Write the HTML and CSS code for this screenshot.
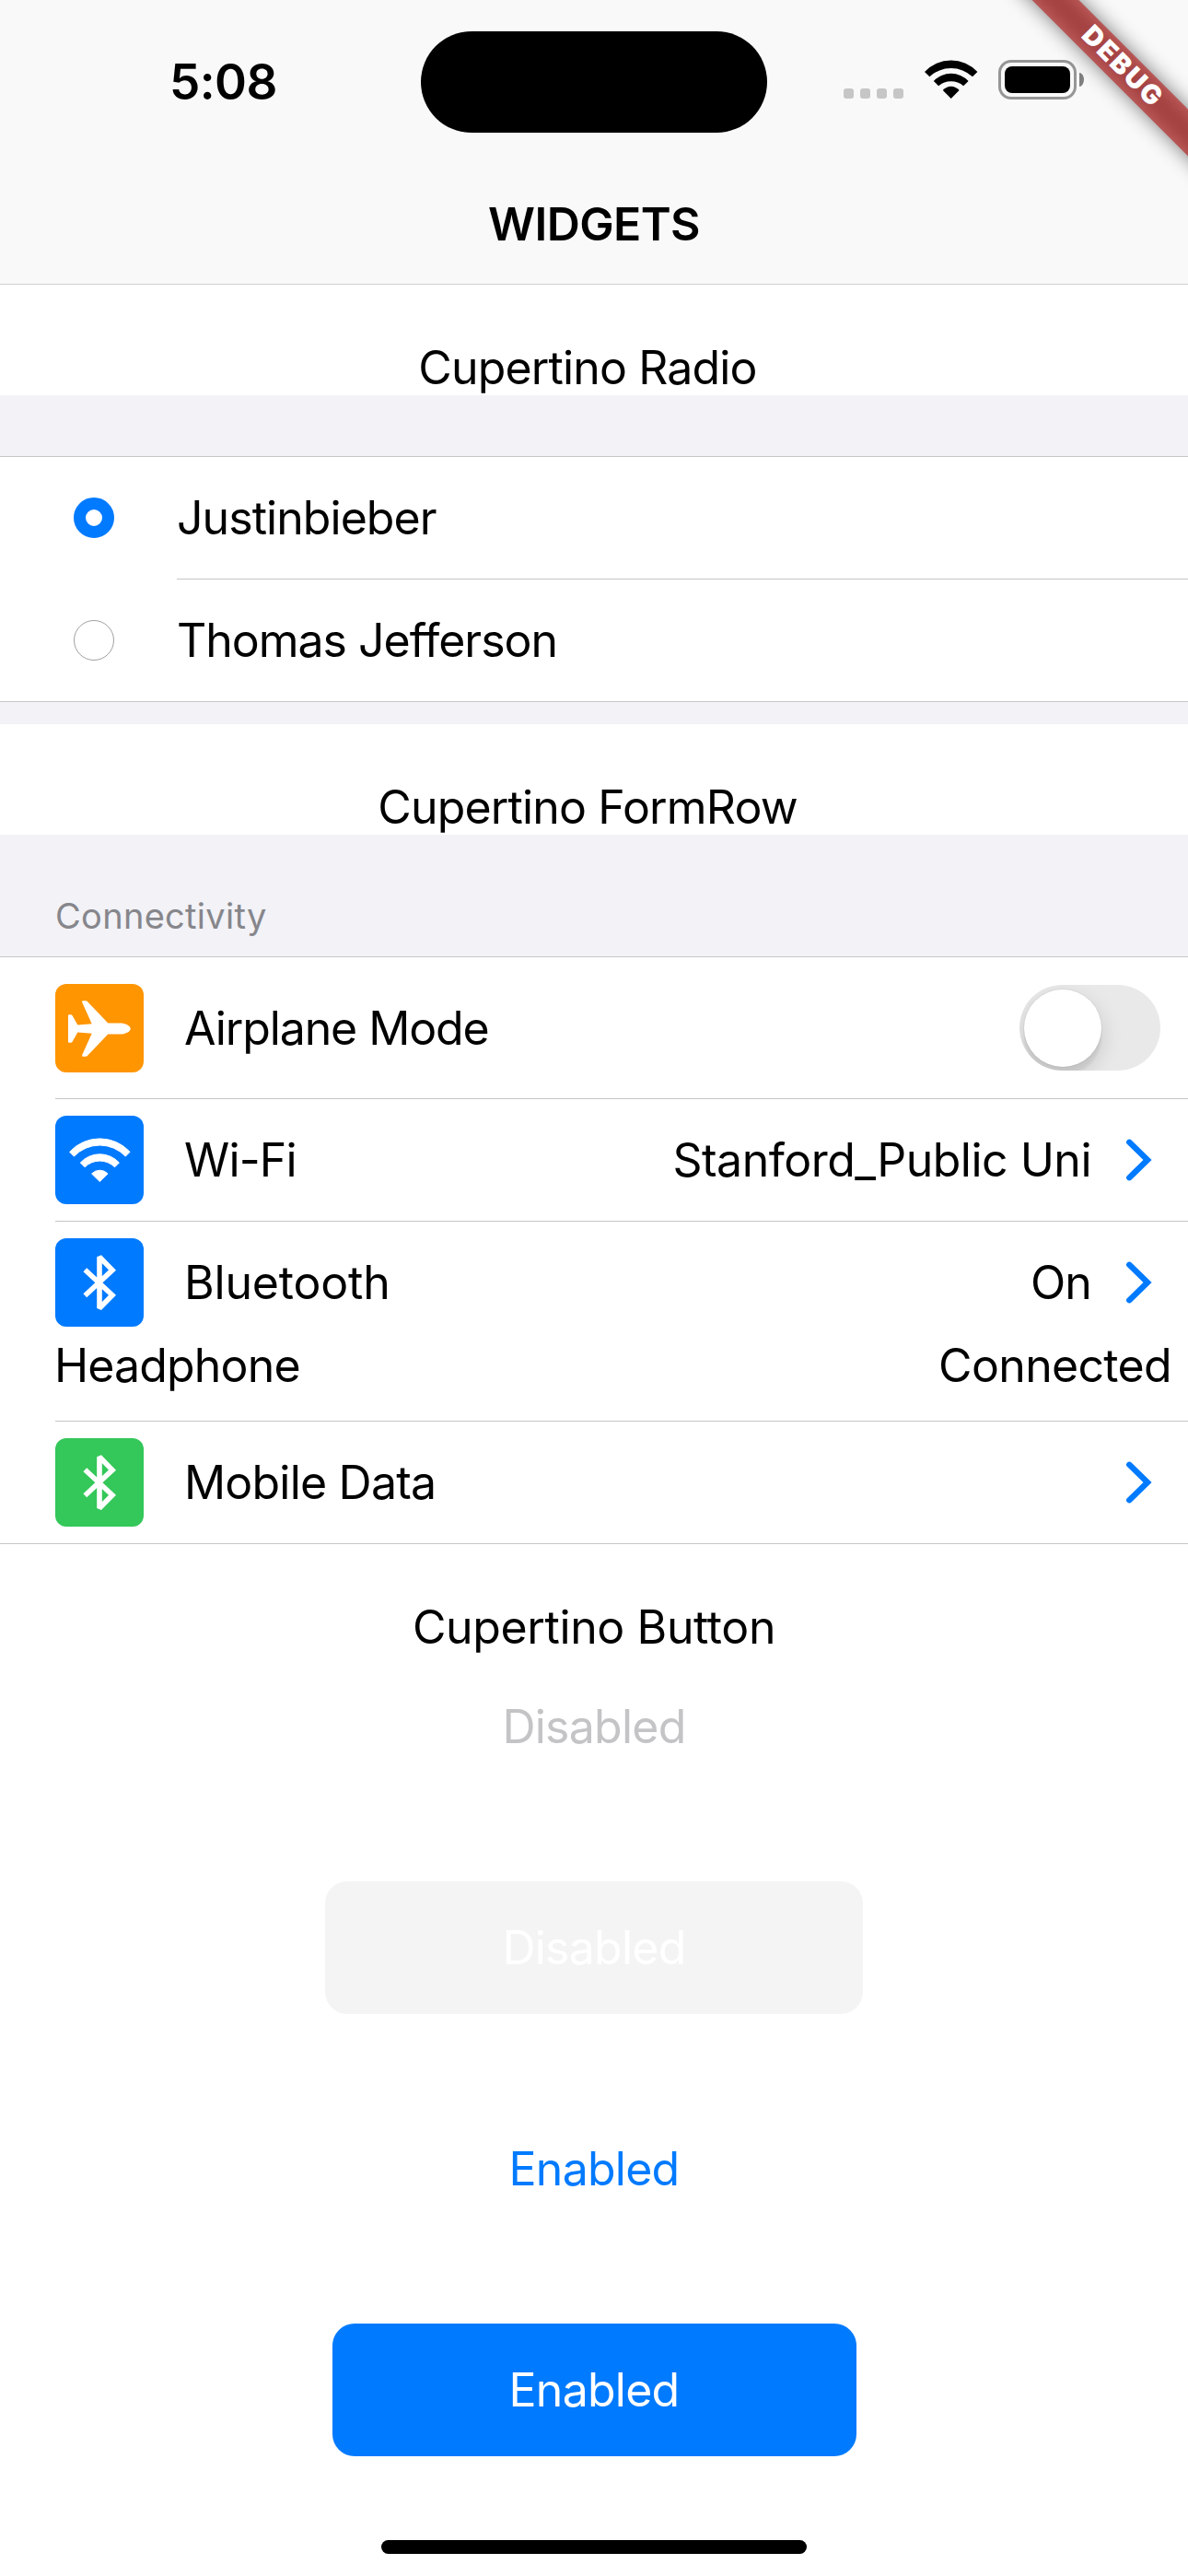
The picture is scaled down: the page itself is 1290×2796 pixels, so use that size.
FILE: index.html
```html
<!DOCTYPE html>
<html lang="en">
<head>
<meta charset="utf-8">
<title>Widgets</title>
<link rel="stylesheet" href="styles.css">
</head>
<body>
<svg class="defs" aria-hidden="true">
  <symbol id="bluetooth" viewBox="0 0 96 96">
    <path d="M32.3 34.2 62 61.8 48 76V20.3L62 34.6 32.3 62.2" fill="none" stroke="#fff" stroke-width="5.6" stroke-linejoin="miter" stroke-miterlimit="2"/>
  </symbol>
  <symbol id="chevron" viewBox="0 0 36 54">
    <path d="M6.3 7.8 26 27 6.3 46.2" fill="none" stroke="#007aff" stroke-width="6.4" stroke-linecap="round"/>
  </symbol>
</svg>
<div class="screen">
  <header class="top">
    <div class="status">
      <span class="time">5:08</span>
      <span class="island"></span>
      <div class="indicators">
        <div class="signal"><i></i><i></i><i></i><i></i></div>
        <svg class="wifi" viewBox="0 0 58 42">
          <path d="M0 13A39 39 0 0 1 57.4 13L52 18.3A33.8 33.8 0 0 0 5.4 18.3Z"/>
          <path d="M9.8 23A25.8 25.8 0 0 1 47.6 23L42.2 28.3A20.5 20.5 0 0 0 15.2 28.3Z"/>
          <path d="M19.8 33A11.6 11.6 0 0 1 37.6 33L28.7 42Z"/>
        </svg>
        <div class="battery"><span class="case"><span class="charge"></span></span><span class="nub"></span></div>
      </div>
    </div>
    <h1 class="nav-title">WIDGETS</h1>
  </header>

  <h2 class="title shifted">Cupertino Radio</h2>
  <section class="group radios">
    <div class="list">
      <label class="radio-row"><span class="radio checked"></span><span class="name justin">Justinbieber</span></label>
      <label class="radio-row"><span class="radio"></span><span class="name thomas">Thomas Jefferson</span></label>
    </div>
  </section>

  <h2 class="title shifted">Cupertino FormRow</h2>
  <section class="group form">
    <h3 class="caption">Connectivity</h3>
    <div class="list">
      <div class="row airplane">
        <svg class="tile orange" viewBox="0 0 96 96">
          <path fill="#fff" d="M14 34.5Q14 33.2 15.3 33.2H16.6Q18 33.2 18.7 34.6L24.3 44.4 39.7 43.2 29.2 20Q28.6 18.3 30 18.3H33Q34.4 18.3 35.3 19.5L57.3 42.4H70C76 42.4 81.7 45 81.7 48.5S76 54.6 70 54.6H57.3L35.3 77.5Q34.4 78.7 33 78.7H30Q28.6 78.7 29.2 77L39.7 53.8 24.3 52.6 18.7 62.4Q18 63.8 16.6 63.8H15.3Q14 63.8 14 62.5Z"/>
        </svg>
        <span class="label ls-airplane">Airplane Mode</span>
        <span class="switch"><span class="thumb"></span></span>
      </div>
      <div class="row">
        <svg class="tile blue" viewBox="0 0 96 96">
          <g fill="#fff" stroke="#fff" stroke-width="1" stroke-linejoin="round">
            <path d="M15.6 39.3A44.4 44.4 0 0 1 81.1 39.3L76.3 44.1A38.4 38.4 0 0 0 20.4 44.1Z"/>
            <path d="M27.3 51A28.6 28.6 0 0 1 69.4 51L64.6 55.8A23 23 0 0 0 32.1 55.8Z"/>
            <path d="M39.6 63A12 12 0 0 1 57.1 63L48.35 71.5Z"/>
          </g>
        </svg>
        <span class="label">Wi-Fi</span>
        <span class="value ls-network">Stanford_Public Uni</span>
        <svg class="chevron"><use href="#chevron"/></svg>
      </div>
      <div class="row with-helper">
        <svg class="tile blue"><use href="#bluetooth"/></svg>
        <span class="label ls-bluetooth">Bluetooth</span>
        <span class="value">On</span>
        <svg class="chevron"><use href="#chevron"/></svg>
      </div>
      <div class="helper"><span>Headphone</span><span class="ls-connected">Connected</span></div>
      <div class="row mobile">
        <svg class="tile green"><use href="#bluetooth"/></svg>
        <span class="label ls-mobile">Mobile Data</span>
        <svg class="chevron"><use href="#chevron"/></svg>
      </div>
    </div>
  </section>

  <h2 class="title ls-button">Cupertino Button</h2>
  <div class="buttons">
    <button class="btn disabled" disabled>Disabled</button>
    <button class="btn filled disabled" disabled>Disabled</button>
    <button class="btn">Enabled</button>
    <button class="btn filled">Enabled</button>
  </div>
  <div class="home-bar"></div>
  <div class="debug">DEBUG</div>
</div>
</body>
</html>
```
FILE: styles.css
```css
* { box-sizing: border-box; margin: 0; }

body {
  background: #fff;
  color: #000;
  font: 400 50px/60px Inter, "Liberation Sans", sans-serif;
  letter-spacing: -0.85px;
}

.defs { position: absolute; width: 0; height: 0; }

.screen {
  position: relative;
  width: 1290px;
  height: 2796px;
  overflow: hidden;
}

/* Status and navigation bars */
.top {
  height: 309px;
  background: #f9f9f9;
  border-bottom: 1px solid #d0d0d0;
}
.status {
  display: grid;
  grid-template-columns: 457px 376px 1fr;
  align-items: center;
  height: 177px;
}
.time {
  padding-left: 184px;
  font-size: 53px;
  font-weight: 600;
  letter-spacing: -0.56px;
}
.island {
  height: 110px;
  margin-top: 1px;
  border-radius: 55px;
  background: #000;
}
.indicators {
  display: flex;
  align-items: flex-end;
  height: 43px;
  margin-bottom: 4px;
  padding-left: 83px;
}
.signal {
  display: flex;
  gap: 7px;
  margin: 0 23px 1px 0;
}
.signal i {
  width: 11px;
  height: 11px;
  border-radius: 3px;
  background: #c6c6c6;
}
.wifi {
  width: 58px;
  height: 42px;
  margin: 0 22px 1px 0;
}
.battery {
  display: flex;
  align-items: center;
  gap: 3px;
}
.case {
  width: 85px;
  height: 43px;
  padding: 4px;
  border: 3px solid #969696;
  border-radius: 14px;
}
.charge {
  display: block;
  height: 29px;
  border-radius: 8px;
  background: #000;
}
.nub {
  width: 5px;
  height: 15px;
  border-radius: 0 5px 5px 0 / 0 7.5px 7.5px 0;
  background: #808080;
}
.nav-title {
  font-size: 50px;
  font-weight: 600;
  line-height: 132px;
  letter-spacing: -0.61px;
  text-align: center;
}

/* Section titles */
.title {
  padding-top: 60px;
  font-size: 50px;
  font-weight: 400;
  text-align: center;
}
.shifted { padding-right: 14px; }

.group { background: #f2f2f7; }
.list {
  background: #fff;
  border-top: 1px solid #c6c6c8;
  border-bottom: 1px solid #c6c6c8;
}

/* Radio list */
.radios { padding: 66px 0 24px; }
.radio-row {
  display: flex;
  align-items: center;
  height: 132px;
  padding-left: 80px;
  gap: 68px;
}
.radio-row + .radio-row { height: 133px; }
.name {
  display: flex;
  flex: 1;
  align-items: center;
  height: 100%;
}
.radio-row + .radio-row .name { border-top: 1px solid #c6c6c8; }
.justin { letter-spacing: -0.95px; }
.thomas { letter-spacing: -1.02px; }
.radio {
  width: 44px;
  height: 44px;
  border: 1px solid #a0a0a3;
  border-radius: 50%;
}
.checked {
  border: 13px solid #007aff;
}

/* Form list */
.caption {
  padding: 65px 60px 21px;
  color: #86868b;
  font-size: 38px;
  font-weight: 400;
  line-height: 46px;
  letter-spacing: 0.3px;
}
.row {
  display: flex;
  align-items: center;
  height: 132px;
  padding-right: 34px;
  margin-left: 60px;
}
.airplane { height: 153px; padding-right: 30px; }
.row + .row, .mobile {
  height: 133px;
  border-top: 1px solid #c6c6c8;
}
.row.with-helper {
  height: 127px;
  padding-top: 6px;
}
.tile {
  width: 96px;
  height: 96px;
  margin-right: 44px;
  border-radius: 12px;
}
.orange { background: #ff9500; }
.blue { background: #007aff; }
.green { background: #34c759; }
.label { flex: 1; }
.chevron {
  width: 36px;
  height: 54px;
  margin-left: 35px;
}
.helper {
  display: flex;
  justify-content: space-between;
  padding: 0 18px 30px 59px;
}
.ls-airplane { letter-spacing: -1.1px; }
.ls-network { letter-spacing: -0.51px; }
.ls-bluetooth { letter-spacing: -0.2px; }
.ls-connected { letter-spacing: -0.67px; }
.ls-mobile { letter-spacing: -0.8px; }
.ls-button { letter-spacing: -0.39px; }

.switch {
  width: 153px;
  height: 93px;
  border-radius: 47px;
  background: #e9e9e9;
  overflow: hidden;
}
.thumb {
  display: block;
  width: 84px;
  height: 84px;
  margin: 4.5px;
  border-radius: 50%;
  background: #fff;
  box-shadow: 0 0 0 1px rgba(0, 0, 0, .04), 0 9px 24px rgba(0, 0, 0, .15), 0 9px 3px rgba(0, 0, 0, .06);
}

/* Buttons */
.buttons {
  display: flex;
  flex-direction: column;
  align-items: center;
  gap: 96px;
  padding-top: 6px;
}
.btn {
  height: 144px;
  padding: 0 192px;
  border: 0;
  border-radius: 24px;
  background: none;
  color: #007aff;
  font: inherit;
  letter-spacing: -0.75px;
}
.disabled { color: #c4c4c6; }
.filled {
  width: 569px;
  padding: 0;
  background: #007aff;
  color: #fff;
}
.filled.disabled { width: 584px; background: #f4f4f4; }

.home-bar {
  width: 462px;
  height: 15px;
  margin: 91px auto 0;
  border-radius: 8px;
  background: #000;
}

/* Corner ribbon: soft shadow below, translucent red band above it */
.debug {
  position: absolute;
  left: 1068px;
  top: 54px;
  width: 300px;
  height: 36px;
  padding-left: 2px;
  color: #fff;
  font-size: 29px;
  font-weight: 900;
  line-height: 34px;
  letter-spacing: 2.1px;
  text-align: center;
  transform: rotate(45deg);
}
.debug::before,
.debug::after {
  content: "";
  position: absolute;
  inset: 0;
  z-index: -1;
}
.debug::before {
  background: rgba(0, 0, 0, .5);
  filter: blur(10.5px);
}
.debug::after { background: rgba(183, 28, 28, .63); }
```
